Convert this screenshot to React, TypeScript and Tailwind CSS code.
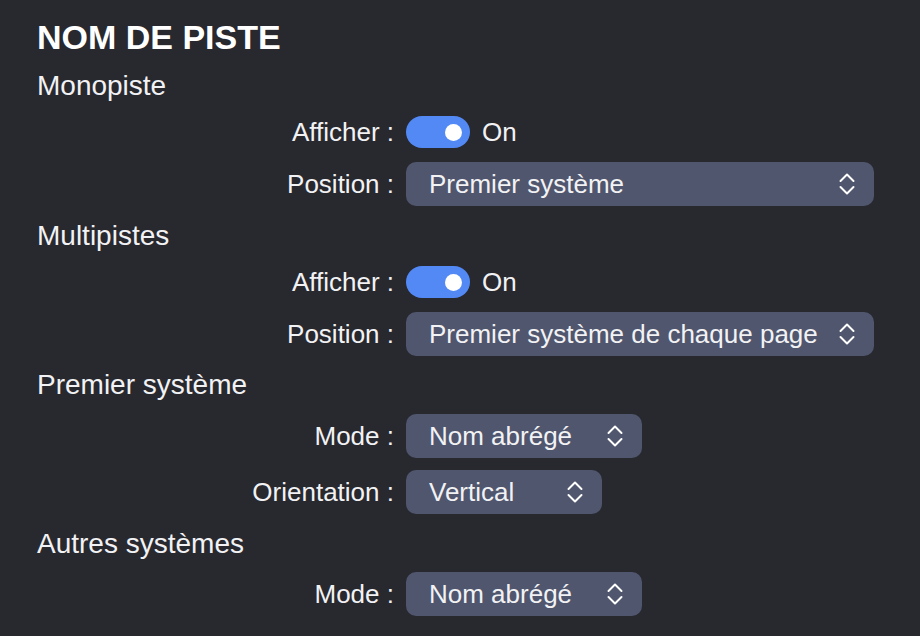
import React from "react";

function Chevrons() {
  return (
    <svg width="16" height="24" viewBox="0 0 16 24" fill="none" stroke="#ffffff" strokeWidth="2" strokeLinecap="round" strokeLinejoin="round">
      <path d="M1.5 9 L8 2.5 L14.5 9" />
      <path d="M1.5 15 L8 21.5 L14.5 15" />
    </svg>
  );
}

function Select({ value, width }: { value: string; width: string }) {
  return (
    <div className={`flex h-[44px] items-center justify-between rounded-[10px] bg-[#4f566e] pl-[23px] pr-[19px] ${width}`}>
      <span className="whitespace-nowrap">{value}</span>
      <Chevrons />
    </div>
  );
}

function Toggle() {
  return (
    <div className="flex items-center gap-[12px]">
      <div className="flex h-[32px] w-[64px] items-center justify-end rounded-full bg-[#5289f5] pr-[8px]">
        <div className="h-[17px] w-[17px] rounded-full bg-white" />
      </div>
      <span>On</span>
    </div>
  );
}

function Row({ label, children, cls }: { label: string; children: React.ReactNode; cls: string }) {
  return (
    <div className={`flex items-center gap-[12px] ${cls}`}>
      <div className="w-[357px] whitespace-nowrap text-right">{label}</div>
      {children}
    </div>
  );
}

function Section({ text, mt }: { text: string; mt: string }) {
  return <div className={`flex h-[36px] items-center text-[28px] ${mt}`}>{text}</div>;
}

export default function App() {
  return (
    <div
      className="flex h-[636px] w-[920px] flex-col bg-[#28282f] pl-[37px] pt-[15px] text-[26px] leading-[30px] text-[#f2f2f4]"
      style={{ fontFamily: "'Liberation Sans', Arial, sans-serif" }}
    >
      <div className="flex h-[44px] items-center text-[34px] font-bold text-white">NOM DE PISTE</div>
      <Section text="Monopiste" mt="mt-[9px]" />
      <Row label="Afficher :" cls="mt-[12px] h-[32px]">
        <Toggle />
      </Row>
      <Row label="Position :" cls="mt-[14px] h-[44px]">
        <Select value="Premier système" width="w-[468px]" />
      </Row>
      <Section text="Multipistes" mt="mt-[12px]" />
      <Row label="Afficher :" cls="mt-[12px] h-[32px]">
        <Toggle />
      </Row>
      <Row label="Position :" cls="mt-[14px] h-[44px]">
        <Select value="Premier système de chaque page" width="w-[468px]" />
      </Row>
      <Section text="Premier système" mt="mt-[11px]" />
      <Row label="Mode :" cls="mt-[11px] h-[44px]">
        <Select value="Nom abrégé" width="w-[236px]" />
      </Row>
      <Row label="Orientation :" cls="mt-[12px] h-[44px]">
        <Select value="Vertical" width="w-[196px]" />
      </Row>
      <Section text="Autres systèmes" mt="mt-[12px]" />
      <Row label="Mode :" cls="mt-[10px] h-[44px]">
        <Select value="Nom abrégé" width="w-[236px]" />
      </Row>
    </div>
  );
}
